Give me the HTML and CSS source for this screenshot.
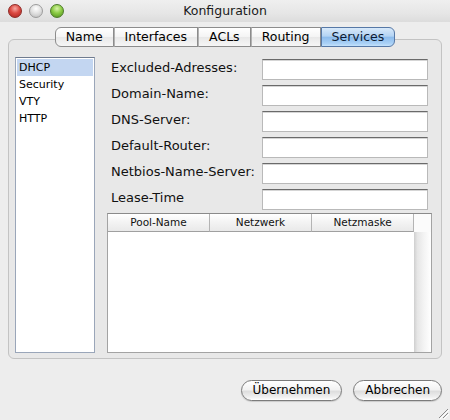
FILE: index.html
```html
<!DOCTYPE html>
<html lang="de">
<head>
<meta charset="utf-8">
<title>Konfiguration</title>
<link rel="stylesheet" href="styles.css">
</head>
<body>
<div class="window">
  <header class="titlebar">
    <div class="lights">
      <span class="light red"></span>
      <span class="light gray"></span>
      <span class="light green"></span>
    </div>
    <div class="title">Konfiguration</div>
    <div></div>
  </header>
  <main class="content">
    <nav class="tabs">
      <div class="tab first">Name</div>
      <div class="tab">Interfaces</div>
      <div class="tab">ACLs</div>
      <div class="tab">Routing</div>
      <div class="tab last selected">Services</div>
    </nav>
    <section class="panel">
      <ul class="list">
        <li class="item selected">DHCP</li>
        <li class="item">Security</li>
        <li class="item">VTY</li>
        <li class="item">HTTP</li>
      </ul>
      <div class="right">
        <div class="form">
          <label class="label">Excluded-Adresses:</label><div class="field"></div>
          <label class="label">Domain-Name:</label><div class="field"></div>
          <label class="label">DNS-Server:</label><div class="field"></div>
          <label class="label">Default-Router:</label><div class="field"></div>
          <label class="label">Netbios-Name-Server:</label><div class="field"></div>
          <label class="label">Lease-Time</label><div class="field"></div>
        </div>
        <div class="table">
          <div class="thead">
            <div class="th">Pool-Name</div>
            <div class="th">Netzwerk</div>
            <div class="th">Netzmaske</div>
            <div class="th-rest"></div>
          </div>
          <div class="tbody">
            <div class="rows"></div>
            <div class="track"></div>
          </div>
        </div>
      </div>
    </section>
    <footer class="buttons">
      <button class="btn">Übernehmen</button>
      <button class="btn">Abbrechen</button>
    </footer>
  </main>
  <div class="grip">
    <svg width="14" height="14" viewBox="0 0 14 14">
      <line x1="13" y1="4" x2="4" y2="13" stroke="#8a8a8a" stroke-width="1"/>
      <line x1="14" y1="5" x2="5" y2="14" stroke="#ffffff" stroke-width="1"/>
      <line x1="13" y1="8" x2="8" y2="13" stroke="#8a8a8a" stroke-width="1"/>
      <line x1="14" y1="9" x2="9" y2="14" stroke="#ffffff" stroke-width="1"/>
    </svg>
  </div>
</div>
</body>
</html>
```

FILE: styles.css
```css
* { box-sizing: border-box; }

html, body {
  margin: 0;
  padding: 0;
}

body {
  background: #ededed;
  font-family: "DejaVu Sans", "Liberation Sans", sans-serif;
  color: #000;
}

.window {
  position: relative;
  width: 450px;
  height: 420px;
  background: #ededed;
  overflow: hidden;
}

.titlebar {
  height: 22px;
  display: grid;
  grid-template-columns: 1fr auto 1fr;
  align-items: center;
  background: linear-gradient(#efefef, #e6e6e6 60%, #dcdcdc);
}

.lights {
  display: flex;
  gap: 7px;
  padding-left: 8px;
}

.light {
  width: 14px;
  height: 14px;
  border-radius: 50%;
  display: block;
}

.light.red {
  background: radial-gradient(circle at 50% 30%, #f6a9a3 0, #dc4b43 45%, #a8201b 100%);
  border: 1px solid #8e2a26;
}

.light.gray {
  background: radial-gradient(circle at 50% 30%, #ffffff 0, #e2e2e2 45%, #b9b9b9 100%);
  border: 1px solid #9c9c9c;
}

.light.green {
  background: radial-gradient(circle at 50% 30%, #d8f3a8 0, #8ccc45 45%, #4d8a1a 100%);
  border: 1px solid #4d7a2a;
}

.title {
  font-size: 12.5px;
  line-height: 22px;
  color: #1a1a1a;
}

.content {
  padding-top: 5px;
}

.tabs {
  position: relative;
  z-index: 1;
  display: flex;
  justify-content: center;
  height: 20px;
  margin-bottom: -8px;
}

.tab {
  height: 20px;
  padding: 0 10px;
  font-size: 12.5px;
  line-height: 18px;
  background: linear-gradient(#ffffff, #f4f4f4 50%, #e8e8e8 51%, #f6f6f6);
  border: 1px solid #8c8c8c;
  border-left: 1px solid #b2b2b2;
}

.tab.first {
  border-left: 1px solid #8c8c8c;
  border-radius: 6px 0 0 6px;
}

.tab.last {
  border-radius: 0 6px 6px 0;
}

.tab.selected {
  background: linear-gradient(#d8e9fa, #b3d3f3 45%, #8dbcec 52%, #a8d0f6 85%, #c4e2fb);
  border: 1px solid #5678a6;
  color: #0b1a33;
}

.panel {
  margin: 0 8px;
  height: 320px;
  border: 1px solid #c3c3c3;
  border-radius: 6px;
  background: #e8e8e8;
  padding: 17px 9px 5px 6px;
  display: flex;
}

.list {
  list-style: none;
  margin: 0;
  width: 80px;
  padding: 1px;
  background: #fff;
  border: 1px solid #9aa6b9;
  border-top-color: #6f7b8f;
}

.item {
  font-size: 11px;
  line-height: 17px;
  padding-left: 2px;
}

.item.selected {
  background: #c3d6f1;
}

.right {
  flex: 1;
  margin-left: 12px;
  display: flex;
  flex-direction: column;
}

.form {
  display: grid;
  grid-template-columns: 1fr 166px;
  grid-auto-rows: 21px;
  row-gap: 5px;
  padding: 2px 4px 0 0;
}

.label {
  font-size: 13px;
  line-height: 17px;
  padding-left: 4px;
  white-space: nowrap;
  color: #111;
}

.field {
  background: #fff;
  border: 1px solid #b9b9b9;
  border-top: 1px solid #6a6a6a;
  box-shadow: inset 0 1px 0 #d5d5d5;
}

.table {
  flex: 1;
  margin-top: 3px;
  border: 1px solid #a3a3a3;
  border-top-color: #8a8a8a;
  background: #fff;
  display: flex;
  flex-direction: column;
}

.thead {
  display: flex;
  height: 18px;
}

.th {
  flex: 0 0 102px;
  font-size: 10.5px;
  line-height: 17px;
  text-align: center;
  background: linear-gradient(#ffffff, #f3f3f3 50%, #e9e9e9);
  border-right: 1px solid #b4b4b4;
  border-bottom: 1px solid #a0a0a0;
  color: #111;
}

.th-rest {
  flex: 1;
  background: #fbfbfb;
}

.tbody {
  flex: 1;
  display: flex;
}

.rows {
  flex: 1;
  background: #fff;
}

.track {
  width: 17px;
  background: linear-gradient(to right, #cfcfcf, #e6e6e6 20%, #f4f4f4 60%, #ffffff);
}

.buttons {
  display: flex;
  justify-content: flex-end;
  gap: 11px;
  margin-top: 21px;
  padding-right: 8px;
}

.btn {
  height: 21px;
  padding: 0 11px;
  font-family: "DejaVu Sans", "Liberation Sans", sans-serif;
  font-size: 12px;
  line-height: 19px;
  color: #000;
  border: 1px solid #7b7b7b;
  border-radius: 11px;
  background: linear-gradient(#ffffff, #f2f2f2 45%, #dedede 55%, #f0f0f0 85%, #ffffff);
  box-shadow: 0 1px 1px rgba(0, 0, 0, 0.15);
}

.grip {
  position: absolute;
  right: 1px;
  bottom: 1px;
  width: 14px;
  height: 14px;
}

.grip svg {
  display: block;
}
```
